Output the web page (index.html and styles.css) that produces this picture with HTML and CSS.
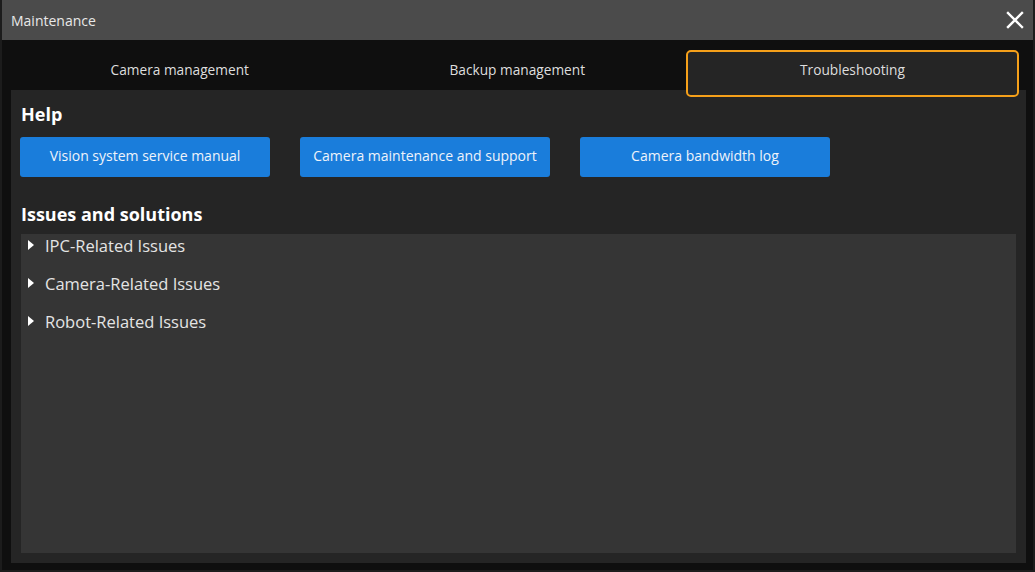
FILE: index.html
```html
<!DOCTYPE html>
<html>
<head>
<meta charset="utf-8">
<link rel="stylesheet" href="styles.css">
</head>
<body>
<div class="window">
  <div class="titlebar">
    <span class="title">Maintenance</span>
    <svg class="close" width="18" height="18" viewBox="0 0 18 18"><path d="M2 2 L16 16 M16 2 L2 16" stroke="#ffffff" stroke-width="2.4" stroke-linecap="square"/></svg>
  </div>
  <div class="body">
    <div class="tabs">
      <div class="tab">Camera management</div>
      <div class="tab">Backup management</div>
      <div class="tab active">Troubleshooting</div>
    </div>
    <div class="panel">
      <h2 class="heading">Help</h2>
      <div class="buttons">
        <button class="btn">Vision system service manual</button>
        <button class="btn">Camera maintenance and support</button>
        <button class="btn">Camera bandwidth log</button>
      </div>
      <h2 class="heading issues">Issues and solutions</h2>
      <div class="list">
        <div class="item"><span class="arrow"></span>IPC-Related Issues</div>
        <div class="item"><span class="arrow"></span>Camera-Related Issues</div>
        <div class="item"><span class="arrow"></span>Robot-Related Issues</div>
      </div>
    </div>
  </div>
</div>
</body>
</html>
```
FILE: styles.css
```css
* { box-sizing: border-box; }
html, body { margin: 0; padding: 0; background: #0f0f0f; }
body {
  width: 1035px;
  height: 572px;
  overflow: hidden;
  font-family: "Open Sans", "Noto Sans", sans-serif;
  color: #e6e6e6;
}
.window {
  width: 1035px;
  height: 572px;
  display: flex;
  flex-direction: column;
  background: #0f0f0f;
  border-left: 2px solid #1c1c1c;
  border-right: 2px solid #1c1c1c;
  border-bottom: 2px solid #1c1c1c;
}
.titlebar {
  height: 40px;
  background: #4b4b4b;
  display: flex;
  align-items: center;
  justify-content: space-between;
  padding: 0 9px 0 9px;
  flex-shrink: 0;
}
.title {
  font-size: 14px;
  color: #e8e8e8;
}
.close { display: block; }
.body {
  flex: 1;
  padding: 10px 7px 7px 9px;
  display: flex;
  flex-direction: column;
}
.tabs {
  display: flex;
  height: 47px;
  position: relative;
  z-index: 1;
  padding-right: 7px;
}
.tab {
  flex: 0 0 337.5px;
  display: flex;
  align-items: center;
  justify-content: center;
  font-size: 13.7px;
  color: #dedede;
  padding-bottom: 9px;
}
.tab.active {
  flex: 1 1 auto;
  border: 2px solid #f5a01a;
  border-radius: 5px;
  background: #252525;
  padding-bottom: 9px;
}
.panel {
  flex: 1;
  background: #252525;
  margin-top: -7px;
  padding: 12px 10px 10px 10px;
  display: flex;
  flex-direction: column;
}
.heading {
  margin: 0;
  font-size: 18px;
  font-weight: 700;
  color: #ffffff;
  line-height: 25px;
}
.buttons {
  display: flex;
  gap: 30px;
  margin-top: 10px;
  margin-left: -1px;
}
.btn {
  width: 250px;
  height: 40px;
  border: none;
  border-radius: 3px;
  background: #1a7ddb;
  color: #eef3fa;
  font-family: "Open Sans", "Noto Sans", sans-serif;
  font-size: 14px;
  padding: 0 0 4px 0;
}
.issues {
  margin-top: 25px;
}
.list {
  flex: 1;
  background: #353535;
  margin-top: 7px;
}
.item {
  height: 38px;
  display: flex;
  align-items: center;
  font-size: 16.5px;
  color: #e4e4e4;
  padding-left: 7px;
}
.item:first-child { margin-top: -8px; }
.arrow {
  width: 0;
  height: 0;
  border-top: 5px solid transparent;
  border-bottom: 5px solid transparent;
  border-left: 6px solid #ffffff;
  margin-right: 11px;
}
```
